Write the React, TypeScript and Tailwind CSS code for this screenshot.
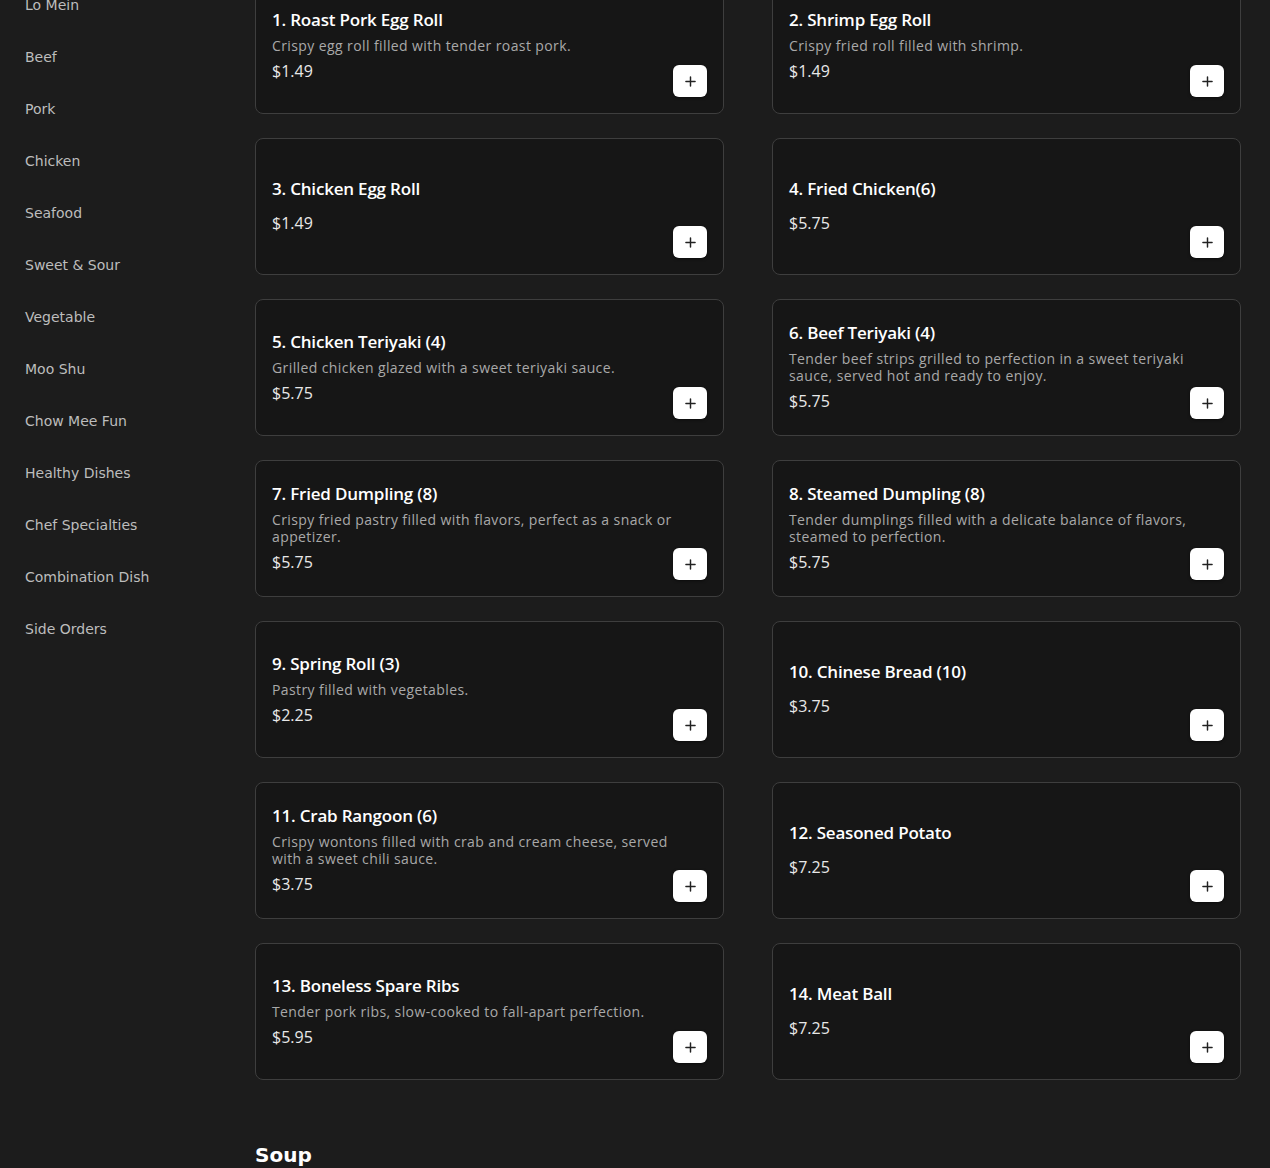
import React from "react";

const categories = [
  "Lo Mein",
  "Beef",
  "Pork",
  "Chicken",
  "Seafood",
  "Sweet & Sour",
  "Vegetable",
  "Moo Shu",
  "Chow Mee Fun",
  "Healthy Dishes",
  "Chef Specialties",
  "Combination Dish",
  "Side Orders",
];

type Item = { name: string; desc: string[]; price: string };

const items: Item[] = [
  { name: "1. Roast Pork Egg Roll", desc: ["Crispy egg roll filled with tender roast pork."], price: "$1.49" },
  { name: "2. Shrimp Egg Roll", desc: ["Crispy fried roll filled with shrimp."], price: "$1.49" },
  { name: "3. Chicken Egg Roll", desc: [], price: "$1.49" },
  { name: "4. Fried Chicken(6)", desc: [], price: "$5.75" },
  { name: "5. Chicken Teriyaki (4)", desc: ["Grilled chicken glazed with a sweet teriyaki sauce."], price: "$5.75" },
  {
    name: "6. Beef Teriyaki (4)",
    desc: ["Tender beef strips grilled to perfection in a sweet teriyaki", "sauce, served hot and ready to enjoy."],
    price: "$5.75",
  },
  {
    name: "7. Fried Dumpling (8)",
    desc: ["Crispy fried pastry filled with flavors, perfect as a snack or", "appetizer."],
    price: "$5.75",
  },
  {
    name: "8. Steamed Dumpling (8)",
    desc: ["Tender dumplings filled with a delicate balance of flavors,", "steamed to perfection."],
    price: "$5.75",
  },
  { name: "9. Spring Roll (3)", desc: ["Pastry filled with vegetables."], price: "$2.25" },
  { name: "10. Chinese Bread (10)", desc: [], price: "$3.75" },
  {
    name: "11. Crab Rangoon (6)",
    desc: ["Crispy wontons filled with crab and cream cheese, served", "with a sweet chili sauce."],
    price: "$3.75",
  },
  { name: "12. Seasoned Potato", desc: [], price: "$7.25" },
  { name: "13. Boneless Spare Ribs", desc: ["Tender pork ribs, slow-cooked to fall-apart perfection."], price: "$5.95" },
  { name: "14. Meat Ball", desc: [], price: "$7.25" },
];

function PlusIcon() {
  return (
    <svg width="11" height="11" viewBox="0 0 12 12" fill="none">
      <path d="M6 1v10M1 6h10" stroke="#222" strokeWidth="1.6" strokeLinecap="round" />
    </svg>
  );
}

function Card({ item }: { item: Item }) {
  return (
    <div className="relative h-[137px] rounded-lg border border-[#3e3e3e] bg-[#161616] px-4 pb-px flex items-center">
      <div className="flex flex-col gap-[5px] font-['Open_Sans',sans-serif]">
        <div className="text-[17px] leading-6 font-semibold text-white tracking-[-0.2px]">{item.name}</div>
        <div className="text-[14px] leading-[17px] tracking-[0.4px] text-[#a9a9a9]">
          {item.desc.map((l, i) => (
            <div key={i} className="whitespace-nowrap">
              {l}
            </div>
          ))}
        </div>
        <div className="text-[16px] leading-6 text-[#e8e8e8]">{item.price}</div>
      </div>
      <button className="absolute right-4 bottom-4 w-[34px] h-[32px] rounded-md bg-white flex items-center justify-center shadow-[0_1px_3px_rgba(0,0,0,0.5)]">
        <PlusIcon />
      </button>
    </div>
  );
}

export default function App() {
  return (
    <div className="min-h-[1168px] bg-[#1c1c1c] font-['DejaVu_Sans',sans-serif] overflow-hidden">
      <div className="flex">
        <aside className="w-[255px] shrink-0 pl-[25px] -mt-[21px]">
          {categories.map((c) => (
            <div key={c} className="py-4 text-[14px] leading-5 text-[#bdbdbd]">
              {c}
            </div>
          ))}
        </aside>
        <main className="flex-1 pr-[29px] -mt-[23px]">
          <div className="grid grid-cols-2 gap-x-[48px] gap-y-[24px]">
            {items.map((it) => (
              <Card key={it.name} item={it} />
            ))}
          </div>
          <h2 className="mt-[61px] text-[20px] leading-7 font-bold text-white font-['DejaVu_Sans',sans-serif]">
            Soup
          </h2>
        </main>
      </div>
    </div>
  );
}
